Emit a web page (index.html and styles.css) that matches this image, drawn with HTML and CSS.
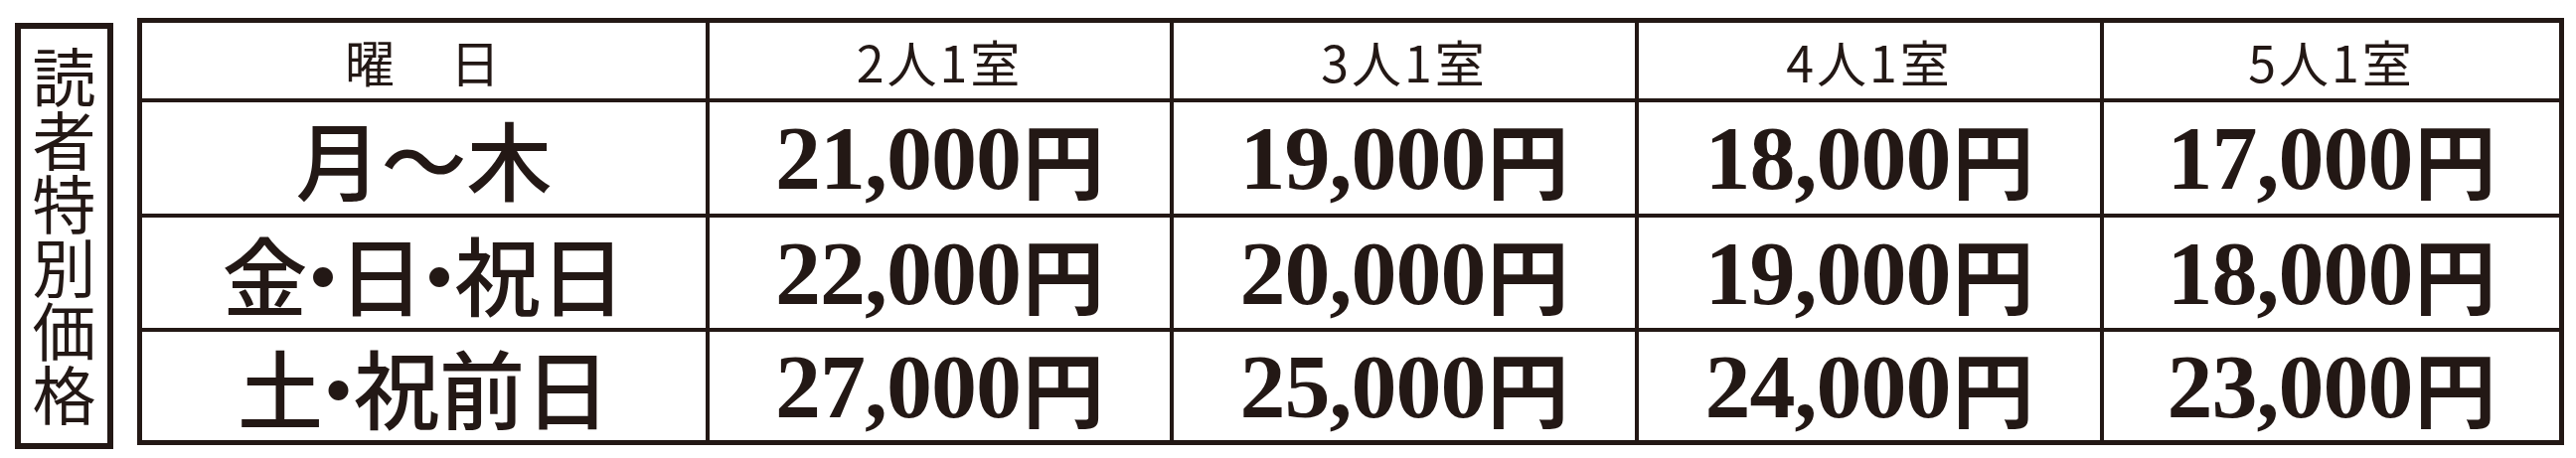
FILE: index.html
```html
<!DOCTYPE html>
<html lang="ja">
<head>
<meta charset="utf-8">
<title>読者特別価格</title>
<link rel="stylesheet" href="styles.css">
</head>
<body>
<div class="page">
  <div class="label"><span class="label-text">読者特別価格</span></div>
  <div class="table">
    <div class="cell head">曜　日</div>
    <div class="cell head">2人1室</div>
    <div class="cell head">3人1室</div>
    <div class="cell head">4人1室</div>
    <div class="cell head">5人1室</div>

    <div class="cell day">月〜木</div>
    <div class="cell price">21,000<span class="yen">円</span></div>
    <div class="cell price">19,000<span class="yen">円</span></div>
    <div class="cell price">18,000<span class="yen">円</span></div>
    <div class="cell price">17,000<span class="yen">円</span></div>

    <div class="cell day"><span class="tight">金・日・</span>祝日</div>
    <div class="cell price">22,000<span class="yen">円</span></div>
    <div class="cell price">20,000<span class="yen">円</span></div>
    <div class="cell price">19,000<span class="yen">円</span></div>
    <div class="cell price">18,000<span class="yen">円</span></div>

    <div class="cell day"><span class="tight">土・</span>祝前日</div>
    <div class="cell price">27,000<span class="yen">円</span></div>
    <div class="cell price">25,000<span class="yen">円</span></div>
    <div class="cell price">24,000<span class="yen">円</span></div>
    <div class="cell price">23,000<span class="yen">円</span></div>
  </div>
</div>
</body>
</html>
```

FILE: styles.css
```css
html, body {
  margin: 0;
  padding: 0;
  background: #ffffff;
}

body {
  color: #231815;
  font-family: "Noto Sans CJK JP", "Noto Sans", sans-serif;
}

.page {
  display: flex;
  align-items: flex-start;
  gap: 24px;
  padding: 18px 0 0 15px;
}

.label {
  box-sizing: border-box;
  width: 99px;
  height: 429px;
  margin-top: 5px;
  border: 6px solid #231815;
  display: flex;
  align-items: center;
  justify-content: center;
}

.label-text {
  writing-mode: vertical-rl;
  font-size: 64px;
  line-height: 1;
  font-weight: 400;
}

.table {
  display: grid;
  grid-template-columns: 567px 463px 464px 464px 458px;
  grid-template-rows: 76px 112px 111px 109px;
  gap: 4px;
  padding: 5px;
  background: #231815;
}

.cell {
  background: #ffffff;
  display: flex;
  align-items: center;
  justify-content: center;
  white-space: nowrap;
}

.head {
  font-size: 50px;
  font-weight: 400;
  line-height: 1;
  letter-spacing: 3px;
}

.day {
  font-size: 86px;
  font-weight: 500;
  line-height: 1;
  font-feature-settings: "palt";
}

.tight {
  letter-spacing: -6px;
}

.price {
  font-family: "Liberation Serif", "Times New Roman", serif;
  font-weight: 700;
  font-size: 92px;
  line-height: 1;
  letter-spacing: -1px;
}

.yen {
  font-family: "Noto Sans CJK JP", sans-serif;
  font-weight: 700;
  font-size: 82px;
  letter-spacing: 0;
  margin-left: 2px;
}
```
